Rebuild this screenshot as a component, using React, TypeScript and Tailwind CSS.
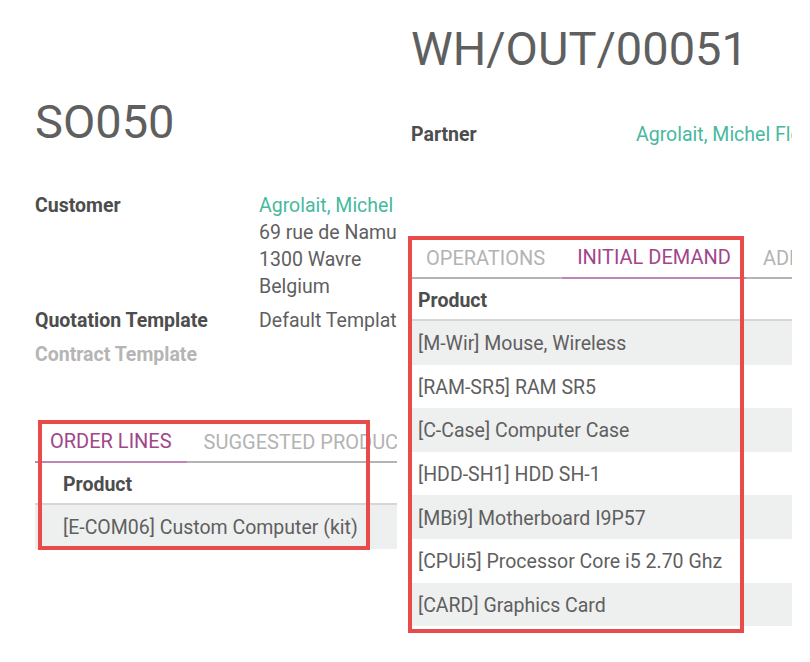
import React from "react";
import clsx from "clsx";

type Tab = { label: string; active?: boolean };

interface FieldProps {
  label: string;
  muted?: boolean;
  children?: React.ReactNode;
}

const Field = ({ label, muted, children }: FieldProps) => (
  <div className="flex leading-[27px]">
    <div
      className={clsx(
        "w-[224px] shrink-0 font-bold",
        muted ? "text-[#b5b5b5]" : "text-[#4d4d4d]",
      )}
    >
      {label}
    </div>
    <div className="flex flex-col whitespace-nowrap text-[#5f5f5f]">
      {children}
    </div>
  </div>
);

const Tabs = ({ tabs }: { tabs: Tab[] }) => (
  <div className="flex h-[43px] gap-[2px] border-b-2 border-[#b4b4b4] text-[20px]">
    {tabs.map((tab) => (
      <div
        key={tab.label}
        className={clsx(
          "-mb-[2px] flex items-center whitespace-nowrap px-[15px] pt-[1px] uppercase",
          tab.active
            ? "border-b-2 border-[#c283b6] text-[#a0468b]"
            : "text-[#b3b3b3]",
        )}
      >
        {tab.label}
      </div>
    ))}
  </div>
);

interface ProductTableProps {
  rows: string[];
  cellPad: string;
}

const ProductTable = ({ rows, cellPad }: ProductTableProps) => (
  <div className="flex flex-col whitespace-nowrap">
    <div
      className={clsx(
        "flex h-[42px] items-center border-b-2 border-[#d6d6d6] pt-[3px] font-bold text-[#4d4d4d]",
        cellPad,
      )}
    >
      Product
    </div>
    {rows.map((row, i) => (
      <div
        key={row}
        className={clsx(
          "flex h-[43.6px] items-center pt-[2px] text-[#5f5f5f]",
          cellPad,
          i % 2 === 0 ? "bg-[#eeefef]" : "bg-white",
        )}
      >
        {row}
      </div>
    ))}
  </div>
);

const RedBox = ({ className }: { className: string }) => (
  <div
    className={clsx(
      "pointer-events-none absolute top-0 border-4 border-[#e94b4b]",
      className,
    )}
  />
);

const demand = [
  "[M-Wir] Mouse, Wireless",
  "[RAM-SR5] RAM SR5",
  "[C-Case] Computer Case",
  "[HDD-SH1] HDD SH-1",
  "[MBi9] Motherboard I9P57",
  "[CPUi5] Processor Core i5 2.70 Ghz",
  "[CARD] Graphics Card",
];

const App = () => {
  return (
    <div className="flex h-[662px] w-[810px] overflow-hidden bg-white font-[family-name:Roboto,sans-serif] text-[19.5px]">
      {/* sale order */}
      <div className="w-[397px] shrink-0 overflow-hidden pl-[35px] pt-[98px]">
        <h1 className="h-[47px] text-[47px] leading-[47px] text-[#5f5f5f]">
          SO050
        </h1>
        <div className="mt-[47px] flex flex-col gap-[7px]">
          <Field label="Customer">
            <span className="text-[#47b9a0]">Agrolait, Michel Fletcher</span>
            <span>69 rue de Namur</span>
            <span>1300 Wavre</span>
            <span>Belgium</span>
          </Field>
          <Field label="Quotation Template">
            <span>Default Template</span>
          </Field>
          <Field label="Contract Template" muted />
        </div>
        <div className="relative mt-[52px] w-[420px]">
          <Tabs
            tabs={[
              { label: "Order Lines", active: true },
              { label: "Suggested Products" },
            ]}
          />
          <ProductTable
            rows={["[E-COM06] Custom Computer (kit)"]}
            cellPad="pl-[28px]"
          />
          <RedBox className="left-[3px] h-[130px] w-[332px]" />
        </div>
      </div>

      {/* delivery order */}
      <div className="w-[395px] shrink-0 overflow-hidden pl-[14px] pt-[25px]">
        <h1 className="h-[47px] text-[47px] leading-[47px] text-[#5f5f5f]">
          WH/OUT/00051
        </h1>
        <div className="mt-[49px] flex leading-[27px]">
          <div className="w-[225px] shrink-0 font-bold text-[#4d4d4d]">
            Partner
          </div>
          <div className="whitespace-nowrap text-[#47b9a0]">
            Agrolait, Michel Fletcher
          </div>
        </div>
        <div className="relative mt-[88px] w-[420px]">
          <Tabs
            tabs={[
              { label: "Operations" },
              { label: "Initial Demand", active: true },
              { label: "Additional Info" },
            ]}
          />
          <ProductTable rows={demand} cellPad="pl-[7px]" />
          <RedBox className="-left-[3px] h-[397px] w-[336px]" />
        </div>
      </div>
    </div>
  );
};

export default App;
